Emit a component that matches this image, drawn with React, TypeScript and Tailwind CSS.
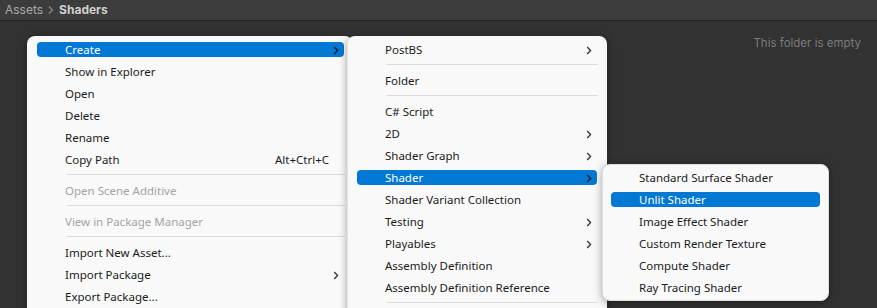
import React from "react";

type Item =
  | { kind: "sep" }
  | { kind: "item"; label: string; sub?: boolean; shortcut?: string; disabled?: boolean; active?: boolean };

const Chevron = ({ active }: { active?: boolean }) => (
  <svg width="6" height="9" viewBox="0 0 6 9" className="shrink-0">
    <polyline points="1.2,1 4.6,4.5 1.2,8" fill="none" stroke={active ? "#0d1a2a" : "#333"} strokeWidth="1.3" />
  </svg>
);

function Menu({
  items,
  textPad,
  hlLeft,
  hlRight,
  sepLeft,
  sepRight,
  chevRight,
}: {
  items: Item[];
  textPad: number;
  hlLeft: number;
  hlRight: number;
  sepLeft: number;
  sepRight: number;
  chevRight: number;
}) {
  return (
    <div className="flex flex-col">
      {items.map((it, i) =>
        it.kind === "sep" ? (
          <div key={i} className="h-[9px] flex items-center" style={{ paddingLeft: sepLeft, paddingRight: sepRight }}>
            <div className="h-px w-full bg-[#dcdcdc]" />
          </div>
        ) : (
          <div key={i} className="relative h-[22px] flex items-center">
            {it.active && (
              <div
                className="absolute top-[4px] h-[15px] rounded-[4px] bg-[#0078d4]"
                style={{ left: hlLeft, right: hlRight }}
              />
            )}
            <div
              className={
                "relative flex-1 flex items-center mt-[2px] " +
                (it.active ? "text-white" : it.disabled ? "text-[#a3a3a3]" : "text-[#1b1b1b]")
              }
              style={{ paddingLeft: textPad, paddingRight: chevRight }}
            >
              <span className="flex-1 whitespace-nowrap">{it.label}</span>
              {it.shortcut && <span className="whitespace-nowrap mr-[10px]">{it.shortcut}</span>}
              {it.sub && <Chevron active={it.active} />}
            </div>
          </div>
        )
      )}
    </div>
  );
}

const menu1: Item[] = [
  { kind: "item", label: "Create", sub: true, active: true },
  { kind: "item", label: "Show in Explorer" },
  { kind: "item", label: "Open" },
  { kind: "item", label: "Delete" },
  { kind: "item", label: "Rename" },
  { kind: "item", label: "Copy Path", shortcut: "Alt+Ctrl+C" },
  { kind: "sep" },
  { kind: "item", label: "Open Scene Additive", disabled: true },
  { kind: "sep" },
  { kind: "item", label: "View in Package Manager", disabled: true },
  { kind: "sep" },
  { kind: "item", label: "Import New Asset..." },
  { kind: "item", label: "Import Package", sub: true },
  { kind: "item", label: "Export Package..." },
];

const menu2: Item[] = [
  { kind: "item", label: "PostBS", sub: true },
  { kind: "sep" },
  { kind: "item", label: "Folder" },
  { kind: "sep" },
  { kind: "item", label: "C# Script" },
  { kind: "item", label: "2D", sub: true },
  { kind: "item", label: "Shader Graph", sub: true },
  { kind: "item", label: "Shader", sub: true, active: true },
  { kind: "item", label: "Shader Variant Collection" },
  { kind: "item", label: "Testing", sub: true },
  { kind: "item", label: "Playables", sub: true },
  { kind: "item", label: "Assembly Definition" },
  { kind: "item", label: "Assembly Definition Reference" },
  { kind: "sep" },
];

const menu3: Item[] = [
  { kind: "item", label: "Standard Surface Shader" },
  { kind: "item", label: "Unlit Shader", active: true },
  { kind: "item", label: "Image Effect Shader" },
  { kind: "item", label: "Custom Render Texture" },
  { kind: "item", label: "Compute Shader" },
  { kind: "item", label: "Ray Tracing Shader" },
];

export default function App() {
  return (
    <div className="relative w-[877px] h-[308px] overflow-hidden bg-[#323232] font-['Inter',sans-serif]">
      <div className="h-[21px] bg-[#3c3c3c] border-b border-[#222] flex items-center pl-[5px] text-[12px] leading-none">
        <span className="text-[#a8a8a8]">Assets</span>
        <svg width="14" height="10" viewBox="0 0 14 10" className="mx-[1px]">
          <polyline points="5,1.5 8.5,5 5,8.5" fill="none" stroke="#8a8a8a" strokeWidth="1.2" />
        </svg>
        <span className="text-[#d0d0d0] font-bold">Shaders</span>
      </div>
      <div className="flex justify-end pr-[16px] pt-[15px] text-[11.5px] text-[#7c7c7c] leading-[14px]">
        This folder is empty
      </div>

      <div className="absolute left-[27px] top-[36px] w-[326px] h-[300px] rounded-[8px] bg-[#f9f9f9] pt-[2px] shadow-[0_2px_8px_rgba(0,0,0,0.35)] text-[11.5px] font-['Noto_Sans',sans-serif]">
        <Menu items={menu1} textPad={38} hlLeft={10} hlRight={9} sepLeft={40} sepRight={8} chevRight={14} />
      </div>

      <div className="absolute left-[347px] top-[36px] w-[260px] h-[300px] rounded-[8px] bg-[#f9f9f9] pt-[2px] border-l border-[#e4e4e4] shadow-[0_2px_8px_rgba(0,0,0,0.35)] text-[11.5px] font-['Noto_Sans',sans-serif]">
        <Menu items={menu2} textPad={37} hlLeft={9} hlRight={10} sepLeft={39} sepRight={9} chevRight={15} />
      </div>

      <div className="absolute left-[602px] top-[164px] w-[227px] h-[137px] rounded-[8px] bg-[#f9f9f9] pt-[1px] border border-[#dedede] shadow-[0_2px_8px_rgba(0,0,0,0.35)] text-[11.5px] font-['Noto_Sans',sans-serif]">
        <Menu items={menu3} textPad={36} hlLeft={8} hlRight={8} sepLeft={36} sepRight={8} chevRight={14} />
      </div>
    </div>
  );
}
